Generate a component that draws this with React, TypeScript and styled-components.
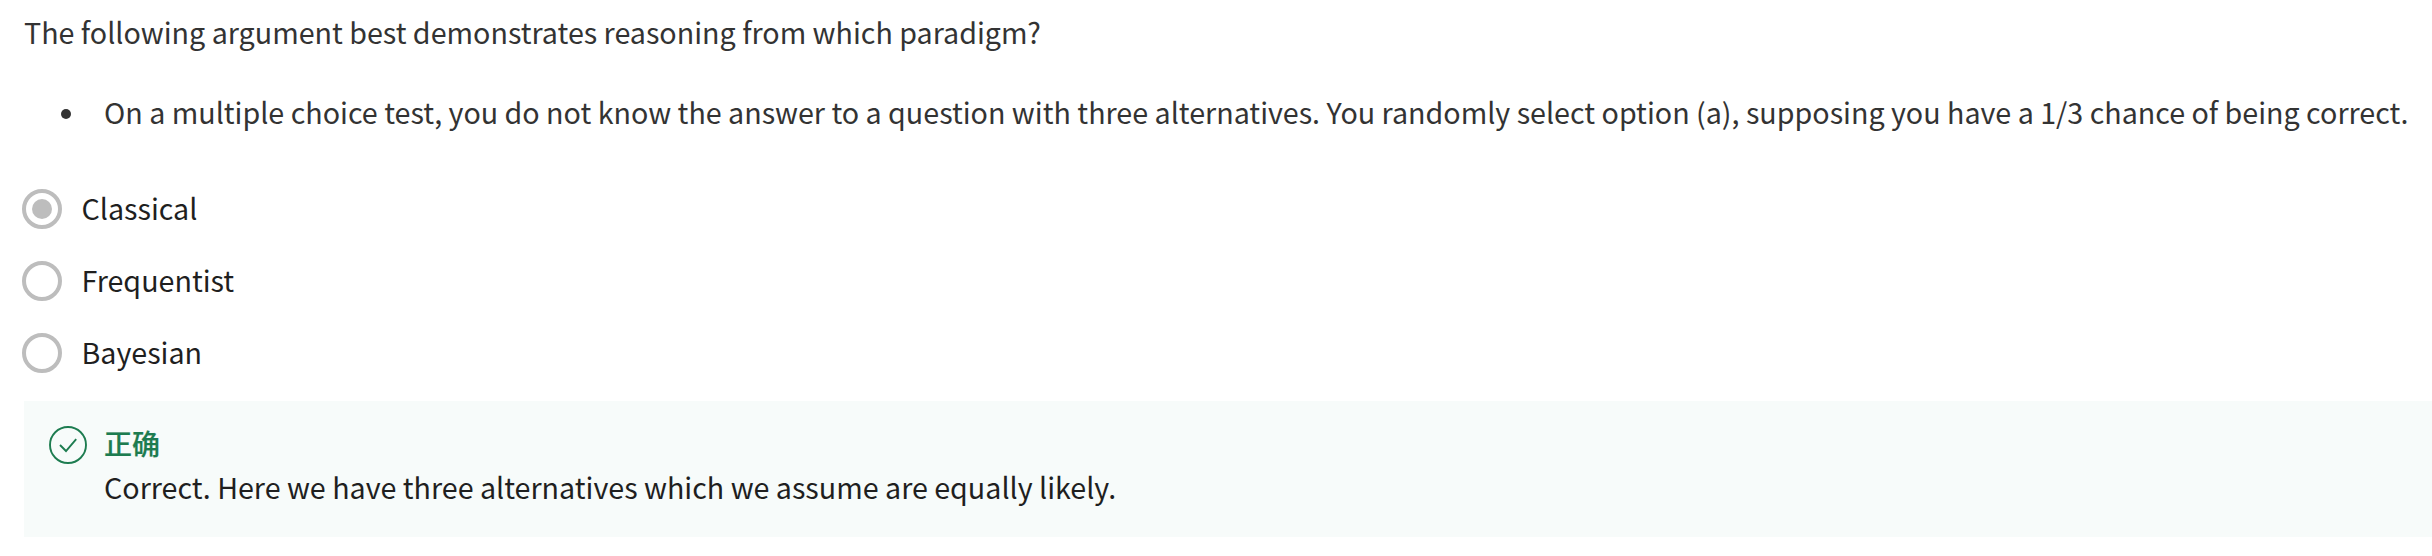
import React from "react";
import styled, { createGlobalStyle } from "styled-components";

const Global = createGlobalStyle`
  * { box-sizing: border-box; }
  body { margin: 0; background: #fff; overflow: hidden; }
`;
const Page = styled.main`
  width: 2432px;
  height: 556px;
  padding: 8px 0 0 24px;
  font: 400 28.66px/48px "Noto Sans CJK SC", sans-serif;
  color: #1f1f1f;
  white-space: nowrap;
`;
const Prompt = styled.div`color: #333;`;
const Question = styled.p`margin: 0;`;
const Bullets = styled.ul`
  list-style: none;
  margin: 32px 0 0;
  padding: 0;
`;
const Bullet = styled.li`
  display: flex;
  align-items: center;
  gap: 33px;
  padding-left: 37px;
  &::before {
    content: "";
    flex: none;
    width: 10px;
    height: 10px;
    margin-top: 4px;
    border-radius: 50%;
    background: #333;
  }
`;
const Options = styled.div`
  margin: 37px 0 0 -2px;
  display: flex;
  flex-direction: column;
`;
const Option = styled.label`
  display: flex;
  align-items: center;
  gap: 19.5px;
  height: 72px;
`;
const OptionText = styled.span`padding-bottom: 3px;`;
const Radio = styled.span<{ $checked?: boolean }>`
  width: 40px;
  height: 40px;
  border: 4px solid #bdbdbd;
  border-radius: 50%;
  display: grid;
  place-items: center;
  &::after {
    content: "";
    width: 20px;
    height: 20px;
    border-radius: 50%;
    background: ${(p) => (p.$checked ? "#bdbdbd" : "transparent")};
  }
`;
const Feedback = styled.section`
  display: flex;
  gap: 16px;
  margin-top: 12px;
  height: 136px;
  padding: 21px 24px;
  background: #f7fbfa;
`;
const Icon = styled.svg`width: 40px; height: 40px; margin-top: 3px; flex: none;`;
const Title = styled.div`
  font-weight: 500;
  -webkit-text-stroke: 0.2px #1d7c50;
  font-size: 28px;
  line-height: 42px;
  color: #1d7c50;
`;
const Detail = styled.div`line-height: 46px;`;

const options = ["Classical", "Frequentist", "Bayesian"];

export default function App() {
  return (
    <Page>
      <Global />
      <Prompt>
        <Question>The following argument best demonstrates reasoning from which paradigm?</Question>
        <Bullets>
          <Bullet>On a multiple choice test, you do not know the answer to a question with three alternatives. You randomly select option (a), supposing you have a 1/3 chance of being correct.</Bullet>
        </Bullets>
      </Prompt>
      <Options>
        {options.map((name, i) => (
          <Option key={name}><Radio $checked={i === 0} /><OptionText>{name}</OptionText></Option>
        ))}
      </Options>
      <Feedback>
        <Icon viewBox="0 0 40 40" fill="none" stroke="#1d7c50" strokeWidth="1.9">
          <circle cx="20" cy="20" r="18" />
          <path d="M12 20l6 6L28.2 14.2" />
        </Icon>
        <div>
          <Title>正确</Title>
          <Detail>Correct. Here we have three alternatives which we assume are equally likely.</Detail>
        </div>
      </Feedback>
    </Page>
  );
}
